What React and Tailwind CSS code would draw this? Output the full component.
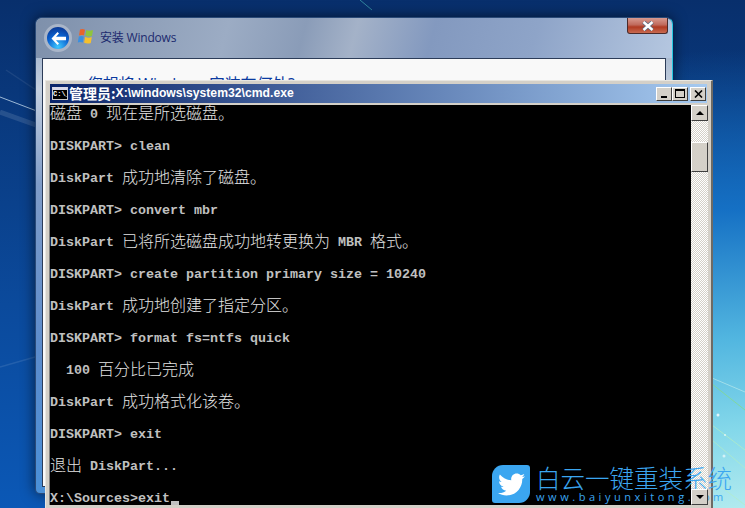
import React from "react";
import { FaTwitter } from "react-icons/fa";

const LINES = [
  "磁盘 0 现在是所选磁盘。",
  "",
  "DISKPART> clean",
  "",
  "DiskPart 成功地清除了磁盘。",
  "",
  "DISKPART> convert mbr",
  "",
  "DiskPart 已将所选磁盘成功地转更换为 MBR 格式。",
  "",
  "DISKPART> create partition primary size = 10240",
  "",
  "DiskPart 成功地创建了指定分区。",
  "",
  "DISKPART> format fs=ntfs quick",
  "",
  "  100 百分比已完成",
  "",
  "DiskPart 成功格式化该卷。",
  "",
  "DISKPART> exit",
  "",
  "退出 DiskPart...",
  "",
];

// ascii is 8px wide bold mono, cjk runs are 16px wide
function ConsoleLine({ text }) {
  const runs = text.match(/[\x00-\x7f]+|[^\x00-\x7f]+/g) || [];
  return (
    <div className="h-4 flex items-center whitespace-pre">
      {runs.map((run, i) =>
        run.charCodeAt(0) < 128 ? (
          <span key={i} className="pt-[3px] leading-4 font-['Liberation_Mono',monospace] font-bold text-[13.33px] text-[#c0c0c0]">
            {run}
          </span>
        ) : (
          <span key={i} className="pb-[3px] leading-4 font-['Noto_Sans_CJK_SC',sans-serif] font-light text-[16px] text-[#e4e4e4]">
            {run}
          </span>
        )
      )}
    </div>
  );
}

function RaisedButton({ className, children }) {
  return (
    <div
      className={`flex items-center justify-center bg-[#d4d0c8] border border-t-white border-l-white border-r-[#404040] border-b-[#404040] ${className}`}
    >
      {children}
    </div>
  );
}

function BackdropStreaks() {
  return (
    <svg className="absolute inset-0" width="745" height="508" fill="none">
      <path d="M0 97 L42 113" stroke="#cfe4f5" strokeOpacity="0.75" strokeWidth="1" />
      <path d="M0 112 L36 125" stroke="#ffffff" strokeOpacity="0.12" strokeWidth="5" />
      <path d="M0 367 L42 355" stroke="#ffffff" strokeOpacity="0.1" strokeWidth="1.5" />
      <path d="M6 70 L36 90" stroke="#ffffff" strokeOpacity="0.08" strokeWidth="1.5" />
      <path d="M360 0 L372 10" stroke="#4fc0c0" strokeOpacity="0.6" strokeWidth="1" />
      <path d="M712 384 L745 410" stroke="#86d98c" strokeOpacity="0.8" strokeWidth="1" />
      <path d="M712 378 L745 392" stroke="#d8f8f0" strokeOpacity="0.5" strokeWidth="1" />
      <path d="M712 425 L745 450" stroke="#b5eec0" strokeOpacity="0.7" strokeWidth="1" />
      <path d="M712 440 L745 468" stroke="#b5eec0" strokeOpacity="0.6" strokeWidth="1" />
      <path d="M712 480 L745 505" stroke="#b5eec0" strokeOpacity="0.6" strokeWidth="1" />
      <circle cx="718" cy="415" r="1.5" fill="#fff" fillOpacity="0.8" />
      <circle cx="725" cy="435" r="1" fill="#fff" fillOpacity="0.7" />
      <circle cx="724" cy="456" r="1.5" fill="#fff" fillOpacity="0.6" />
    </svg>
  );
}

function BackButton() {
  return (
    <div className="flex items-center justify-center w-[28px] h-[28px] rounded-full border-[3px] border-[#a9b5c8] bg-[radial-gradient(circle_at_50%_90%,#3fc8ff_0,#0b62d0_50%,#0a2a80_100%)]">
      <svg width="17" height="15" viewBox="0 0 17 15">
        <path d="M7.5 1 L1.5 7.5 L7.5 14 L9 12.5 L6 9.3 H16 V5.7 H6 L9 2.5 Z" fill="#fff" />
      </svg>
    </div>
  );
}

function WindowsFlag() {
  return (
    <svg width="17" height="17" viewBox="0 0 17 16" className="ml-[5px] mb-[3px]">
      <path d="M3 1 Q5.5 0 8 1.2 L7 6.8 Q4.5 6 2 7 Z" fill="#e8642c" />
      <path d="M9.3 1.6 Q12 3 16 1.5 L15 7.4 Q11.5 8.6 8.4 7.2 Z" fill="#8fc53c" />
      <path d="M1.8 8 Q4.5 7.2 6.8 8 L5.8 14 Q3 13 0.8 14 Z" fill="#3a8fe0" />
      <path d="M8.1 8.4 Q11.5 9.8 14.8 8.6 L13.8 14.4 Q10.5 15.6 7.1 14.2 Z" fill="#f6c02c" />
    </svg>
  );
}

function SetupWindow() {
  return (
    <div className="absolute left-[35px] top-[17px] w-[638px] h-[477px] flex flex-col rounded-t-[7px] rounded-b-[5px] border border-[#2a4a78] border-r-[#25c8e0] shadow-[0_0_14px_rgba(0,0,0,0.6)] bg-[linear-gradient(180deg,#8ea2be_0,#c4d0e0_15%,#7f9cc8_35%,#5c8ccc_70%,#4a90d8_100%)]">
      <div className="relative h-[40px] shrink-0 flex items-center pl-[8px] rounded-t-[7px] bg-[linear-gradient(105deg,#7e90ab_0,#9cacc4_30%,#8a9cb8_42%,#a4b2c8_50%,#8399bf_62%,#8ea4c8_78%,#b5c7e0_100%)]">
        <BackButton />
        <WindowsFlag />
        <span className="ml-[6px] text-[12px] tracking-[-0.2px] text-[#1c2a6e] font-['Open_Sans','Noto_Sans_CJK_SC',sans-serif]">
          安装 Windows
        </span>
        <div className="absolute right-[4px] top-0 w-[41px] h-[16px] flex items-center justify-center rounded-b-[3px] border border-t-0 border-[#4a2a2a] bg-[linear-gradient(180deg,#d89a90_0,#c06a5c_45%,#b03a22_60%,#c86a50_100%)]">
          <svg width="12" height="10" viewBox="0 0 12 10">
            <path d="M1.5 1 L10.5 9 M10.5 1 L1.5 9" stroke="#5a6a80" strokeWidth="4" />
            <path d="M1.5 1 L10.5 9 M10.5 1 L1.5 9" stroke="#fff" strokeWidth="2.4" />
          </svg>
        </div>
      </div>
      <div className="flex-1 mx-[6px] mb-[6px] border border-[#2c3c58] bg-[#f9f9f9] pl-[44px] pt-[13px]">
        <div className="text-[16px] leading-[24px] tracking-[-0.2px] text-[#0a3aa0] font-['Open_Sans','Noto_Sans_CJK_SC',sans-serif]">
          您想将 Windows 安装在何处?
        </div>
      </div>
    </div>
  );
}

function CmdIcon() {
  return (
    <div className="w-[16px] h-[13px] mx-[2px] border border-[#c8c8c8] border-t-[3px] border-t-[#d8d8e8] bg-black text-white text-[7px] leading-[9px] font-['Liberation_Mono',monospace] font-bold overflow-hidden">
      C:\_
    </div>
  );
}

function Scrollbar() {
  return (
    <div className="w-[17px] flex flex-col bg-[repeating-conic-gradient(#d4d0c8_0_25%,#ffffff_0_50%)] bg-[length:2px_2px]">
      <RaisedButton className="h-[16px] shrink-0">
        <div className="w-0 h-0 border-x-[4px] border-x-transparent border-b-[4px] border-b-black" />
      </RaisedButton>
      <div className="h-[21px] shrink-0" />
      <RaisedButton className="h-[30px] shrink-0" />
      <div className="flex-1" />
      <RaisedButton className="relative z-20 h-[16px] shrink-0">
        <div className="w-0 h-0 border-x-[4px] border-x-transparent border-t-[4px] border-t-black" />
      </RaisedButton>
    </div>
  );
}

function CmdWindow() {
  return (
    <div className="absolute left-[45px] top-[80px] w-[668px] h-[428px] flex flex-col p-[3px] pb-0 bg-[#d4d0c8] border-t border-l border-t-[#e8e6e0] border-l-[#e8e6e0] border-r-2 border-r-[#6e6a64]">
      <div className="h-[19px] shrink-0 flex items-center mx-[1px] bg-[linear-gradient(90deg,#0a246a_0,#a6caf0_100%)]">
        <CmdIcon />
        <span className="ml-[-1px] mt-[-2px] text-[14px] leading-[18px] font-bold text-white font-['Noto_Sans_CJK_SC',sans-serif]">
          管理员:
        </span>
        <span className="mt-[-2px] text-[12.2px] leading-[18px] font-bold text-white font-['Liberation_Sans',sans-serif]">
          X:\windows\system32\cmd.exe
        </span>
        <RaisedButton className="ml-auto w-[16px] h-[14px] items-end pb-[2px]">
          <div className="w-[6px] h-[2px] bg-black" />
        </RaisedButton>
        <RaisedButton className="w-[16px] h-[14px]">
          <div className="w-[10px] h-[9px] border border-t-2 border-black" />
        </RaisedButton>
        <RaisedButton className="ml-[2px] mr-[1px] w-[16px] h-[14px]">
          <svg width="9" height="8" viewBox="0 0 9 8">
            <path d="M1 0.5 L8 7.5 M8 0.5 L1 7.5" stroke="#000" strokeWidth="1.6" />
          </svg>
        </RaisedButton>
      </div>
      <div className="h-[400px] mt-[2px] flex border-l border-[#808080]">
        <div className="flex-1 bg-black overflow-hidden">
          {LINES.map((line, i) => (
            <ConsoleLine key={i} text={line} />
          ))}
          <div className="relative">
            <ConsoleLine text="X:\Sources>exit" />
            <div className="absolute left-[121px] top-[12px] w-[8px] h-[4px] bg-[#c0c0c0]" />
          </div>
        </div>
        <Scrollbar />
      </div>
    </div>
  );
}

function Watermark() {
  return (
    <div className="absolute z-10 left-[492px] top-[465px] flex text-[#3ba6f0]">
      <div className="w-[38px] h-[38px] flex items-center justify-center rounded-tl-[11px] rounded-tr-[3px] rounded-bl-[3px] rounded-br-[11px] bg-[#3ba6f0]">
        <FaTwitter className="text-white text-[27px]" />
      </div>
      <div className="ml-[6px] flex flex-col">
        <div className="text-[24.5px] leading-[26px] font-extralight whitespace-nowrap font-['Noto_Sans_CJK_SC',sans-serif]">
          白云一键重装系统
        </div>
        <div className="text-[11px] leading-[12px] tracking-[3.55px] whitespace-nowrap font-['Open_Sans',sans-serif]">
          www.baiyunxitong.com
        </div>
      </div>
    </div>
  );
}

export default function App() {
  return (
    <div className="relative w-[745px] h-[508px] overflow-hidden bg-[radial-gradient(circle_at_100%_112%,#d4f8f2_0,#84d8ea_140px,#52b6e0_230px,#1570c4_360px,rgba(12,70,150,0)_520px),linear-gradient(180deg,#082f6c_0,#0b4a9c_60%,#0b58b6_100%)]">
      <BackdropStreaks />
      <SetupWindow />
      <CmdWindow />
      <Watermark />
    </div>
  );
}
